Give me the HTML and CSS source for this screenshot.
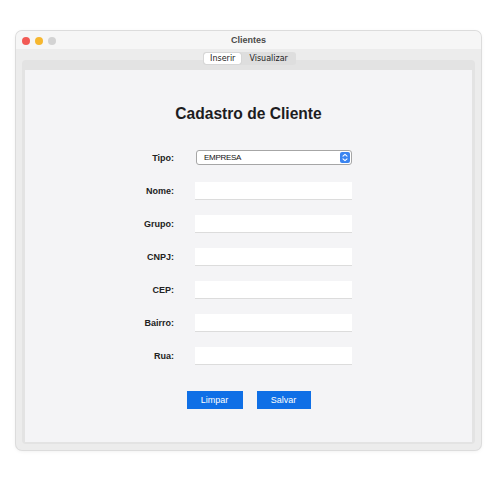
FILE: index.html
```html
<!DOCTYPE html>
<html lang="pt">
<head>
<meta charset="utf-8">
<title>Clientes</title>
<link rel="stylesheet" href="styles.css">
</head>
<body>
<div class="window">
  <div class="titlebar">
    <div class="lights">
      <span class="light red"></span>
      <span class="light yellow"></span>
      <span class="light gray"></span>
    </div>
    <div class="title">Clientes</div>
  </div>
  <div class="content">
    <div class="tabs">
      <span class="tab active">Inserir</span>
      <span class="tab">Visualizar</span>
    </div>
    <div class="tabbox">
      <div class="panel">
        <h1 class="heading">Cadastro de Cliente</h1>
        <div class="form">
          <label class="label">Tipo:</label>
          <div class="field">
            <div class="select">
              <span class="select-text">EMPRESA</span>
              <span class="stepper">
                <svg width="6" height="9" viewBox="0 0 6 9"><path d="M1 3.2 L3 1.4 L5 3.2 M1 5.8 L3 7.6 L5 5.8" fill="none" stroke="#fff" stroke-width="1.1" stroke-linecap="round" stroke-linejoin="round"/></svg>
              </span>
            </div>
          </div>
          <label class="label">Nome:</label>
          <div class="field"><input class="input" type="text"></div>
          <label class="label">Grupo:</label>
          <div class="field"><input class="input" type="text"></div>
          <label class="label">CNPJ:</label>
          <div class="field"><input class="input" type="text"></div>
          <label class="label">CEP:</label>
          <div class="field"><input class="input" type="text"></div>
          <label class="label">Bairro:</label>
          <div class="field"><input class="input" type="text"></div>
          <label class="label">Rua:</label>
          <div class="field"><input class="input" type="text"></div>
        </div>
        <div class="buttons">
          <button class="btn btn-limpar">Limpar</button>
          <button class="btn btn-salvar">Salvar</button>
        </div>
      </div>
    </div>
  </div>
</div>
</body>
</html>
```
FILE: styles.css
```css
html, body {
  margin: 0;
  padding: 0;
  background: #ffffff;
}
body {
  width: 499px;
  height: 500px;
  font-family: "Liberation Sans", Arial, sans-serif;
  padding-top: 31px;
  padding-left: 16px;
  box-sizing: border-box;
}
.window {
  width: 465px;
  height: 419px;
  border-radius: 6px;
  background: #ececec;
  box-shadow: 0 0 0 1px #dcdcdc, 0 1px 4px rgba(0,0,0,0.08);
  overflow: hidden;
  display: flex;
  flex-direction: column;
}
.titlebar {
  height: 18px;
  background: #f6f6f6;
  display: flex;
  align-items: center;
  position: relative;
  flex: none;
}
.lights {
  display: flex;
  gap: 5px;
  padding-left: 6px;
  padding-top: 1px;
}
.light {
  width: 8px;
  height: 8px;
  border-radius: 50%;
  display: block;
}
.red { background: #f25a55; }
.yellow { background: #f6b72f; }
.gray { background: #d3d3d3; }
.title {
  position: absolute;
  left: 0;
  right: 0;
  top: 0;
  line-height: 18px;
  text-align: center;
  font-size: 9px;
  font-weight: bold;
  color: #4a4a4a;
  pointer-events: none;
}
.content {
  flex: 1;
  display: flex;
  flex-direction: column;
  padding: 3px 6px 6px 6px;
}
.tabs {
  align-self: center;
  display: flex;
  background: #dedede;
  border-radius: 3px;
  padding: 1px;
  height: 13px;
  box-sizing: border-box;
  margin-bottom: -5px;
  margin-left: 2px;
  position: relative;
  z-index: 1;
  font-family: "DejaVu Sans", Verdana, sans-serif;
  font-size: 8px;
  color: #1e1e1e;
}
.tab {
  display: flex;
  align-items: center;
  padding: 0 5px;
  border-radius: 2px;
  line-height: 11px;
}
.tab.active {
  background: #ffffff;
  box-shadow: 0 0 1px rgba(0,0,0,0.3);
  padding: 0 6px 0 6px;
}
.tab + .tab {
  padding-left: 8px;
  padding-right: 7px;
}
.tabbox {
  flex: 1;
  background: #e3e3e3;
  border-radius: 4px;
  padding: 10px 3px 2px 3px;
  display: flex;
}
.panel {
  flex: 1;
  background: #f4f4f6;
  display: flex;
  flex-direction: column;
}
.heading {
  margin: 34px 0 0 0;
  text-align: center;
  font-size: 15.6px;
  line-height: 20px;
  font-weight: bold;
  color: #1d1d1f;
}
.form {
  margin-top: 17px;
  display: grid;
  grid-template-columns: 149px 157px;
  grid-auto-rows: 33px;
  column-gap: 21px;
}
.label {
  justify-self: end;
  align-self: center;
  font-size: 9px;
  font-weight: bold;
  color: #222;
}
.field {
  display: flex;
  align-items: center;
}
.input {
  width: 157px;
  height: 18px;
  box-sizing: border-box;
  margin: 0;
  border: none;
  border-bottom: 1px solid #dcdcdc;
  background: #ffffff;
  outline: none;
  padding: 0 4px;
}
.select {
  width: 156px;
  height: 15px;
  box-sizing: border-box;
  margin-left: 1px;
  border: 1px solid #a6a6a6;
  border-radius: 3px;
  background: #ffffff;
  display: flex;
  align-items: center;
  justify-content: space-between;
  padding: 0 1px 0 7px;
}
.select-text {
  font-size: 8px;
  letter-spacing: -0.3px;
  color: #111;
}
.stepper {
  width: 10px;
  height: 11px;
  border-radius: 2px;
  background: #3a84f0;
  display: flex;
  align-items: center;
  justify-content: center;
}
.buttons {
  margin-top: 19px;
  display: flex;
  justify-content: center;
  gap: 14px;
}
.btn {
  height: 18px;
  border: none;
  margin: 0;
  padding: 0;
  background: #0f6fe6;
  color: #ffffff;
  font-family: "Liberation Sans", Arial, sans-serif;
  font-size: 9px;
}
.btn-limpar { width: 56px; }
.btn-salvar { width: 54px; }
```
